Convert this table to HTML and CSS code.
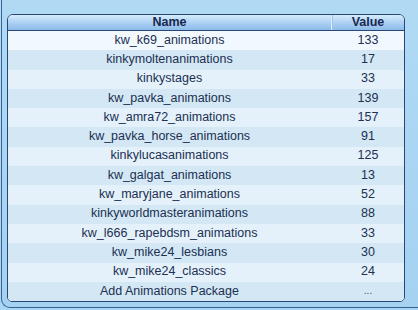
FILE: index.html
```html
<!DOCTYPE html>
<html>
<head>
<meta charset="utf-8">
<link rel="stylesheet" href="styles.css">
</head>
<body>
<div class="frame">
  <div class="table">
    <div class="head">
      <div class="hname">Name</div>
      <div class="hval">Value</div>
    </div>
    <div class="row first"><div class="name">kw_k69_animations</div><div class="val">133</div></div>
    <div class="row dark"><div class="name">kinkymoltenanimations</div><div class="val">17</div></div>
    <div class="row"><div class="name">kinkystages</div><div class="val">33</div></div>
    <div class="row dark"><div class="name">kw_pavka_animations</div><div class="val">139</div></div>
    <div class="row"><div class="name">kw_amra72_animations</div><div class="val">157</div></div>
    <div class="row dark"><div class="name">kw_pavka_horse_animations</div><div class="val">91</div></div>
    <div class="row"><div class="name">kinkylucasanimations</div><div class="val">125</div></div>
    <div class="row dark"><div class="name">kw_galgat_animations</div><div class="val">13</div></div>
    <div class="row"><div class="name">kw_maryjane_animations</div><div class="val">52</div></div>
    <div class="row dark"><div class="name">kinkyworldmasteranimations</div><div class="val">88</div></div>
    <div class="row"><div class="name">kw_l666_rapebdsm_animations</div><div class="val">33</div></div>
    <div class="row dark"><div class="name">kw_mike24_lesbians</div><div class="val">30</div></div>
    <div class="row"><div class="name">kw_mike24_classics</div><div class="val">24</div></div>
    <div class="row dark last"><div class="name">Add Animations Package</div><div class="val dots">...</div></div>
  </div>
</div>
</body>
</html>
```
FILE: styles.css
```css
html, body {
  margin: 0;
  padding: 0;
}
body {
  width: 418px;
  height: 310px;
  overflow: hidden;
  background: linear-gradient(180deg, #b4ddf6 0%, #a8d6f4 100%);
  font-family: "Liberation Sans", Arial, sans-serif;
  font-size: 12.5px;
  color: #212f52;
}
.frame {
  margin-left: 1px;
  height: 308px;
  box-sizing: border-box;
  border-left: 1px solid #3b5f93;
  border-bottom: 1px solid #3b5f93;
  border-bottom-left-radius: 9px;
  padding: 14px 14px 0 5px;
  background: linear-gradient(180deg, #b0daf4 0%, #a9d5f3 60%, #a6d2f2 100%);
}
.table {
  width: 398px;
  box-sizing: border-box;
  border: 1px solid #2a4676;
  border-radius: 6px 6px 5px 5px;
  overflow: hidden;
  background: #e3f1fa;
}
.head {
  display: grid;
  grid-template-columns: 323px 1fr;
  height: 15px;
  border-bottom: 1px solid #2a4676;
  background: linear-gradient(180deg, #d6ecfc 0%, #b2d4f4 45%, #8dbbe9 100%);
  font-weight: bold;
  color: #1a2850;
  line-height: 15px;
}
.hname, .hval {
  text-align: center;
}
.hval {
  border-left: 1px solid #dcecfa;
  box-shadow: inset 1px 0 0 #9fc4ea;
}
.row {
  display: grid;
  grid-template-columns: 323px 1fr;
  height: 19.3px;
  align-items: center;
  background: #e4f1fa;
}
.row.first {
  background: #f2f9fe;
}
.row.dark {
  background: #d3e8f4;
}
.name, .val {
  text-align: center;
  white-space: nowrap;
  padding-bottom: 2px;
}
.val {
  padding-left: 1px;
}
.dots {
  font-size: 10px;
  color: #3a4a66;
}
```
